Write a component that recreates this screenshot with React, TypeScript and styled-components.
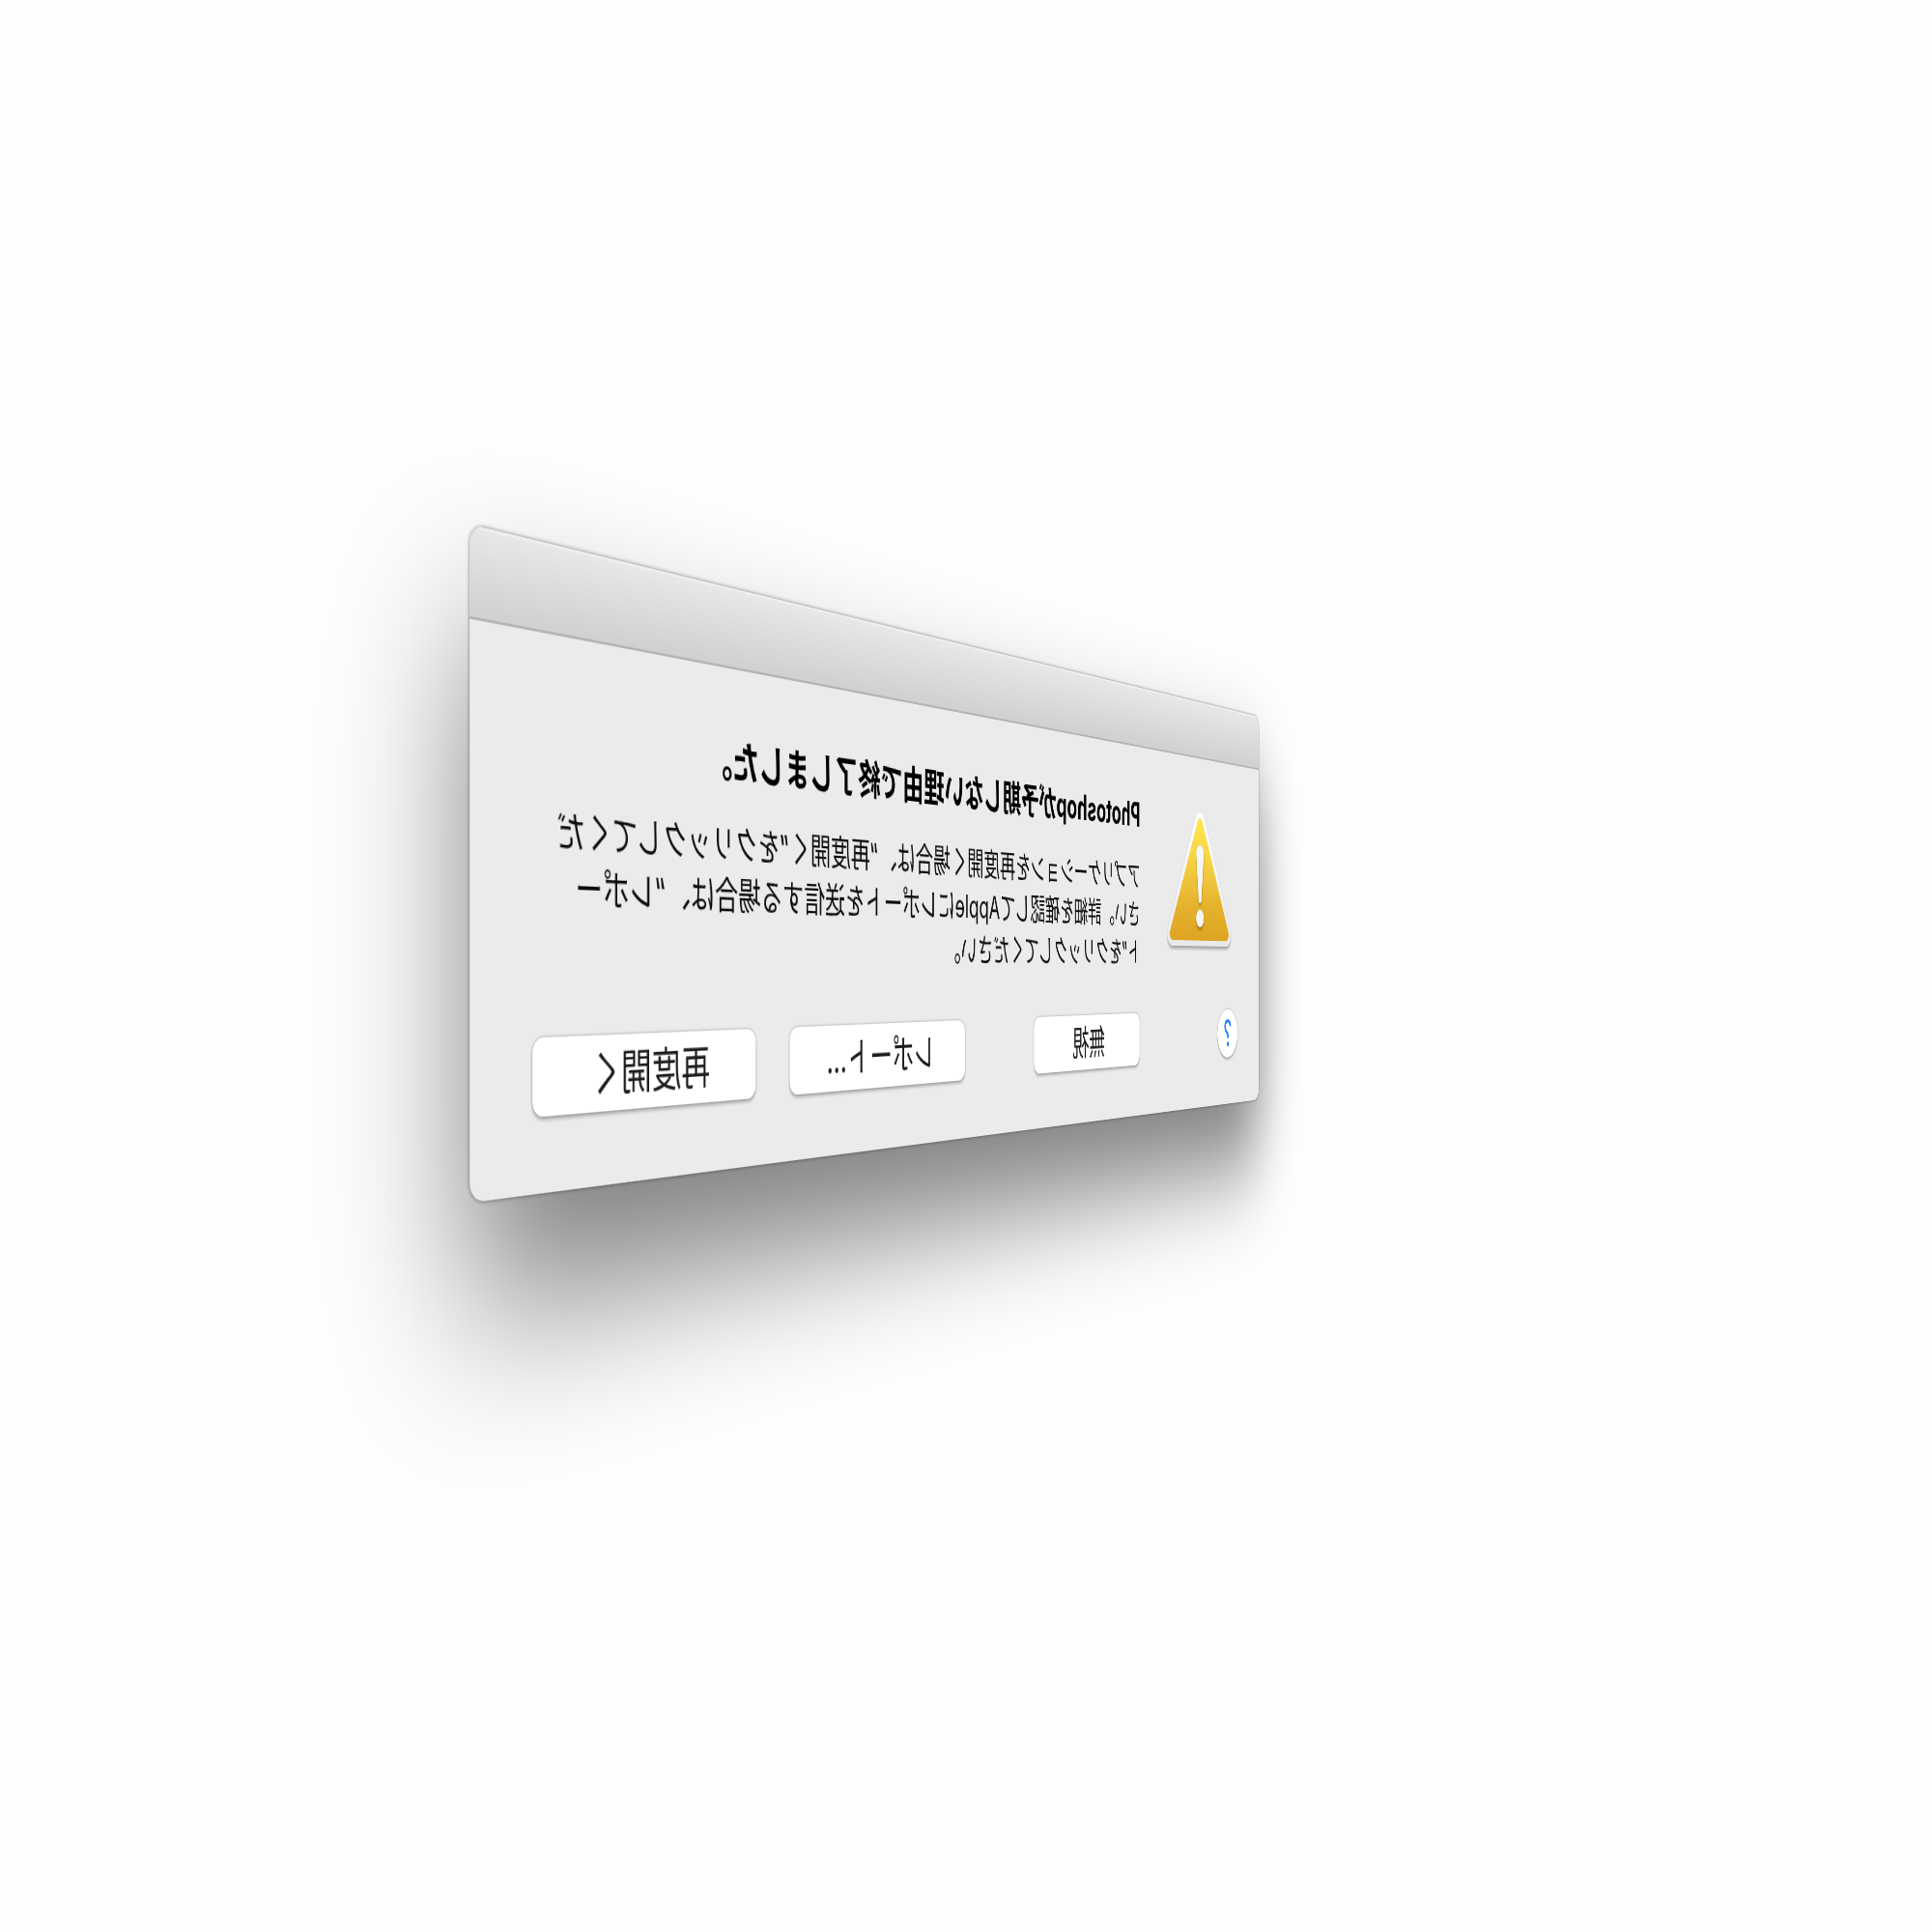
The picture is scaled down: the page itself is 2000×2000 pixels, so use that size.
import React from "react";
import styled, { createGlobalStyle } from "styled-components";

const GlobalStyle = createGlobalStyle`
  *, *::before, *::after {
    box-sizing: border-box;
  }
  body {
    margin: 0;
    background: #fefefe;
    color: #0c0c0c;
    font-family: Inter, "Noto Sans CJK JP", sans-serif;
  }
`;

/* The scene looks at the alert from behind, through a perspective camera. */
const Scene = styled.main`
  display: flex;
  align-items: center;
  justify-content: center;
  min-height: 100vh;
  overflow: hidden;
  perspective: 2222px;
`;

const Turntable = styled.div`
  flex: none;
  padding: 0 32px 155px 0;
  transform: rotateY(-121.5deg);
`;

const Dialog = styled.section`
  width: 1460px;
  border-radius: 15px;
  overflow: hidden;
  background: #ebebeb;
  box-shadow:
    0 0 3px 1px rgba(0, 0, 0, 0.3),
    0 80px 138px rgba(0, 0, 0, 0.5);
`;

const TitleBar = styled.header`
  height: 71px;
  border-bottom: 2px solid #b4b2b4;
  background: linear-gradient(#e9e7ea, #d1cfd2);
  box-shadow: inset 0 2px 1px #f0eff1;
`;

const Message = styled.div`
  display: flex;
  gap: 52px;
  padding: 57px 68px 50px;
`;

const IconBox = styled.div`
  display: flex;
  flex: none;
  justify-content: center;
  width: 228px;
  padding-top: 12px;
`;

const Icon = styled.svg`
  display: block;
  width: 188px;
  height: 172px;
  overflow: visible;
`;

const Copy = styled.div`
  flex: 1;
`;

const Heading = styled.h1`
  margin: 0 0 27px;
  font-size: 39px;
  line-height: 48px;
  font-weight: 700;
  color: #000;
`;

const Detail = styled.p`
  margin: 0;
  font-size: 33px;
  line-height: 45px;
  white-space: nowrap;
`;

const Footer = styled.footer`
  display: flex;
  align-items: center;
  padding: 0 68px 60px;
`;

const Actions = styled.div`
  display: flex;
  flex: 1;
  gap: 51px;
  margin-left: 220px;
`;

const Control = styled.button`
  height: 62px;
  padding: 0;
  border: 0;
  background: #fff;
  font-family: inherit;
  font-size: 39px;
  line-height: 48px;
  box-shadow:
    0 0 2px 1px rgba(0, 0, 0, 0.18),
    0 3px 3px rgba(0, 0, 0, 0.2);
`;

const HelpButton = styled(Control)`
  width: 62px;
  border-radius: 50%;
  color: #1a7dff;
  font-size: 48px;
`;

const ActionButton = styled(Control)<{ $width: number; $apart?: boolean }>`
  width: ${(p) => p.$width}px;
  margin-right: ${(p) => (p.$apart ? "auto" : "0")};
  border-radius: 12px;
  color: #1c1c1c;
`;

function WarningIcon() {
  return (
    <Icon viewBox="0 0 188 172" role="img" aria-label="警告">
      <defs>
        <linearGradient id="rim" x1="0" y1="0" x2="0" y2="170" gradientUnits="userSpaceOnUse">
          <stop offset="0" stopColor="#ffffff" />
          <stop offset="1" stopColor="#e8e8e8" />
        </linearGradient>
        <linearGradient id="amber" x1="0" y1="6" x2="0" y2="160" gradientUnits="userSpaceOnUse">
          <stop offset="0" stopColor="#ffe650" />
          <stop offset="0.3" stopColor="#f7d645" />
          <stop offset="0.75" stopColor="#e4b02c" />
          <stop offset="1" stopColor="#dea423" />
        </linearGradient>
        <filter id="drop" x="-10%" y="-10%" width="120%" height="125%">
          <feDropShadow dx="0" dy="3" stdDeviation="2" floodColor="#000" floodOpacity="0.35" />
        </filter>
      </defs>
      <path
        d="M94 14 172 152H16Z"
        fill="url(#rim)"
        stroke="url(#rim)"
        strokeWidth="30"
        strokeLinejoin="round"
        filter="url(#drop)"
      />
      <path
        d="M94 14 172 152H16Z"
        fill="url(#amber)"
        stroke="url(#amber)"
        strokeWidth="16"
        strokeLinejoin="round"
      />
      <g fill="#f5f5f5" filter="url(#drop)">
        <path d="M83 51C83 44 87 40 94 40S105 44 105 51L98 109Q97 113 94 113T90 109Z" />
        <circle cx="94" cy="132" r="11" />
      </g>
    </Icon>
  );
}

export default function App() {
  return (
    <>
      <GlobalStyle />
      <Scene lang="ja">
        <Turntable>
          <Dialog role="alertdialog" aria-labelledby="alert-title" aria-describedby="alert-detail">
            <TitleBar />
            <Message>
              <IconBox>
                <WarningIcon />
              </IconBox>
              <Copy>
                <Heading id="alert-title">Photoshopが予期しない理由で終了しました。</Heading>
                <Detail id="alert-detail">
                  アプリケーションを再度開く場合は、“再度開く”をクリックしてくだ
                  <br />
                  さい。詳細を確認してAppleにレポートを送信する場合は、“レポー
                  <br />
                  ト”をクリックしてください。
                </Detail>
              </Copy>
            </Message>
            <Footer>
              <HelpButton type="button">?</HelpButton>
              <Actions>
                <ActionButton type="button" $width={254} $apart>
                  無視
                </ActionButton>
                <ActionButton type="button" $width={306}>
                  レポート...
                </ActionButton>
                <ActionButton type="button" $width={287}>
                  再度開く
                </ActionButton>
              </Actions>
            </Footer>
          </Dialog>
        </Turntable>
      </Scene>
    </>
  );
}
